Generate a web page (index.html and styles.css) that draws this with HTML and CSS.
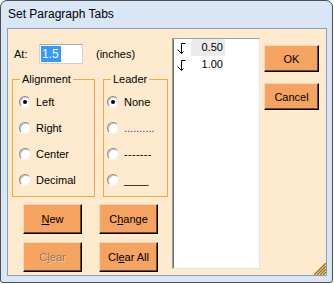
FILE: index.html
```html
<!DOCTYPE html>
<html lang="en">
<head>
    <meta charset="UTF-8">
    <title>Set Paragraph Tabs</title>
    <link rel="stylesheet" href="styles.css">
</head>
<body>
    <div class="window">
        <div class="titlebar">Set Paragraph Tabs</div>
        <div class="client">
            <div class="leftCol">
                <div class="atRow">
                    <span class="atLabel">At:</span>
                    <div class="textBox"><span class="selText">1.5</span></div>
                    <span class="units">(inches)</span>
                </div>

                <div class="groups">
                    <fieldset class="group alignGroup">
                        <legend>Alignment</legend>
                        <div class="opt"><span class="radio checked"></span>Left</div>
                        <div class="opt"><span class="radio"></span>Right</div>
                        <div class="opt"><span class="radio"></span>Center</div>
                        <div class="opt"><span class="radio"></span>Decimal</div>
                    </fieldset>
                    <fieldset class="group leaderGroup">
                        <legend>Leader</legend>
                        <div class="opt"><span class="radio checked"></span>None</div>
                        <div class="opt"><span class="radio"></span><span class="dots">..........</span></div>
                        <div class="opt"><span class="radio"></span><span class="dashes">-------</span></div>
                        <div class="opt"><span class="radio"></span>____</div>
                    </fieldset>
                </div>

                <div class="btnGrid">
                    <button class="btn"><u>N</u>ew</button>
                    <button class="btn">C<u>h</u>ange</button>
                    <button class="btn disabled">C<u>l</u>ear</button>
                    <button class="btn">Cl<u>e</u>ar All</button>
                </div>
            </div>

            <div class="tabList">
                <div class="tabItem">
                    <svg class="tabIcon" width="10" height="12" viewBox="0 0 10 12"><path d="M4.5 0.5 H8.5 M4.5 0.5 V10.5 M0.5 6.5 L4.5 10.5 L6.5 8.5" fill="none" stroke="#000" stroke-width="1"/></svg>
                    <span class="tabPos current">0.50</span>
                </div>
                <div class="tabItem">
                    <svg class="tabIcon" width="10" height="12" viewBox="0 0 10 12"><path d="M4.5 0.5 H8.5 M4.5 0.5 V10.5 M0.5 6.5 L4.5 10.5 L6.5 8.5" fill="none" stroke="#000" stroke-width="1"/></svg>
                    <span class="tabPos">1.00</span>
                </div>
            </div>

            <div class="rightCol">
                <button class="btn dlgBtn">OK</button>
                <button class="btn dlgBtn">Cancel</button>
            </div>

            <!-- size grip -->
            <svg class="grip" width="12" height="12" viewBox="0 0 12 12">
                <path d="M12 0 L0 12 M12 3 L3 12 M12 6 L6 12 M12 9 L9 12" stroke="#a5650f" stroke-width="1.3"/>
            </svg>
        </div>
    </div>
</body>
</html>
```

FILE: styles.css
```css
body {
    margin: 0;
    background: #fff;
    font-family: "Liberation Sans", Arial, sans-serif;
    font-size: 11px;
    color: #000;
}
.window {
    width: 333px;
    height: 283px;
    box-sizing: border-box;
    border: 1px solid #4f4f4f;
    border-radius: 7px 7px 3px 3px;
    background: #d9e6f6;
    display: flex;
    flex-direction: column;
}
.titlebar {
    height: 27px;
    line-height: 27px;
    padding-left: 7px;
    font-size: 12px;
}
.client {
    position: relative;
    flex: 1;
    margin: 0 5px 6px 6px;
    border: 1px solid #8b9db7;
    background: #fdeacf;
    display: flex;
}

/* left part */
.leftCol {
    width: 160px;
    padding-left: 4px;
}
.atRow {
    display: flex;
    align-items: center;
    height: 20px;
    margin-top: 15px;
}
.atLabel {
    width: 27px;
    padding-left: 2px;
    box-sizing: border-box;
}
.textBox {
    width: 44px;
    height: 20px;
    box-sizing: border-box;
    background: #fff;
    border: 1px solid #cfd3d8;
    border-top-color: #a6abb3;
    padding: 1px 0 0 1px;
}
.selText {
    display: inline-block;
    background: #3399ff;
    color: #fff;
    font-size: 12px;
    line-height: 16px;
    padding: 0 2px 0 1px;
}
.units {
    margin-left: 13px;
}
.groups {
    display: flex;
    gap: 8px;
    margin-top: 9px;
}
.group {
    margin: 0;
    border: 1px solid #f6a83f;
    padding: 3px 0 3px 7px;
    box-sizing: border-box;
}
.group legend {
    padding: 0 2px;
    line-height: 13px;
}
.alignGroup {
    width: 83px;
}
.leaderGroup {
    width: 65px;
}
.opt {
    display: flex;
    align-items: center;
    height: 26px;
}
.alignGroup .opt {
    margin-left: -1px;
}
.leaderGroup .opt {
    margin-left: -4px;
}
.radio {
    position: relative;
    width: 12px;
    height: 12px;
    box-sizing: border-box;
    border-radius: 50%;
    border: 1px solid;
    border-color: #8a8a8a #e9e9e9 #f4f4f4 #8a8a8a;
    background: #fff;
    box-shadow: inset 1px 1px 0 #c9c9c9;
    margin-right: 5px;
}
.radio.checked::after {
    content: "";
    position: absolute;
    left: 3px;
    top: 3px;
    width: 4px;
    height: 4px;
    border-radius: 50%;
    background: #000;
}
.dots {
    color: #5c2470;
    letter-spacing: 0;
}
.dashes {
    letter-spacing: 0.3px;
}

/* buttons */
.btnGrid {
    display: grid;
    grid-template-columns: 59px 59px;
    grid-auto-rows: 30px;
    column-gap: 17px;
    row-gap: 8px;
    margin: 7px 0 0 11px;
}
.btn {
    font-family: "Liberation Sans", Arial, sans-serif;
    font-size: 11px;
    color: #000;
    background: #f4a460;
    border: 1px solid;
    border-color: #fcd6ad #000 #000 #fcd6ad;
    box-shadow: inset -1px -1px 0 #6e4423;
    padding: 0;
    margin: 0;
}
.btn.disabled {
    color: #8a7766;
    text-shadow: 1px 1px 0 #f9cc9c;
}
.dlgBtn {
    width: 55px;
    height: 27px;
}

/* tab list */
.tabList {
    width: 88px;
    height: 231px;
    box-sizing: border-box;
    margin-top: 9px;
    background: #fff;
    border: 1px solid;
    border-color: #a0a0a0 #e3e3e3 #e3e3e3 #a0a0a0;
    box-shadow: inset 1px 0 0 #6d6d6d;
    padding: 0 0 0 3px;
}
.tabItem {
    display: flex;
    height: 17px;
}
.tabIcon {
    margin: 4px 4px 0 1px;
}
.tabPos {
    width: 34px;
    box-sizing: border-box;
    text-align: right;
    padding-right: 2px;
    line-height: 17px;
}
.tabPos.current {
    background: #ebebeb;
}

.rightCol {
    display: flex;
    flex-direction: column;
    gap: 11px;
    margin: 16px 0 0 4px;
}
.grip {
    position: absolute;
    right: 0;
    bottom: 0;
}
```
